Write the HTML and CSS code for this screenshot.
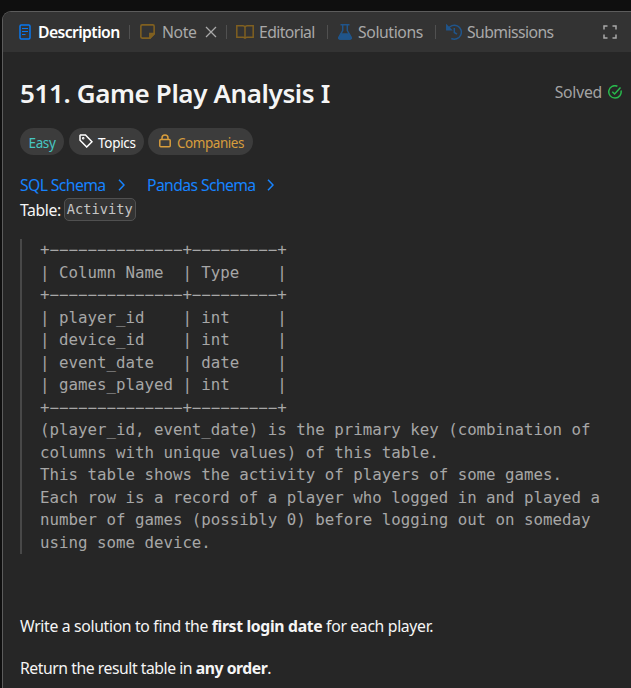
FILE: index.html
```html
<!DOCTYPE html>
<html lang="en">
<head>
<meta charset="utf-8">
<title>511. Game Play Analysis I</title>
<link rel="stylesheet" href="styles.css">
</head>
<body>
<main class="panel">
  <nav class="tabs">
    <div class="tab tab-description active">
      <svg class="icon blue-bright" width="12" height="16" viewBox="0 0 12 16"><rect x="1" y="1" width="10" height="14" rx="1.2"/><path d="M3 4.5h6M3 7.5h6M3 10.5h3.5" stroke-width="1.2"/></svg>
      <span class="label">Description</span>
    </div>
    <i class="divider"></i>
    <div class="tab tab-note">
      <svg class="icon gold" width="15" height="15" viewBox="0 0 14 14"><path d="M2 .8h10q1.2 0 1.2 1.2v7.2l-4 4H2Q.8 13.200.8 12V2Q.8.8 2 .8z"/><path d="M13.200 9h-4v4.200z" fill="currentColor"/></svg>
      <span class="label">Note</span>
      <svg class="icon close" width="12" height="12" viewBox="0 0 12 12"><path d="M1 1l10 10M11 1L1 11"/></svg>
    </div>
    <i class="divider"></i>
    <div class="tab tab-editorial">
      <svg class="icon gold" width="18" height="14" viewBox="0 0 18 14"><path d="M9 2.300Q8.400.8 7 .8H.8v11.400H7.200L9 13.200l1.800-1h6.400V.8H11Q9.600.8 9 2.300zV13"/></svg>
      <span class="label">Editorial</span>
    </div>
    <i class="divider"></i>
    <div class="tab tab-solutions">
      <svg class="icon blue" width="14" height="16" viewBox="0 0 14 16"><path d="M2.500.8h9M4.700 1v5.500L.9 13.200q-.7 1.800 1.200 1.800h9.800q1.900 0 1.200-1.800L9.300 6.500V1"/><path d="M3 10h8l2.200 4-1.200 1H2l-1.200-1z" fill="currentColor"/></svg>
      <span class="label">Solutions</span>
    </div>
    <i class="divider"></i>
    <div class="tab tab-submissions">
      <svg class="icon blue" width="16" height="16" viewBox="0 0 16 16"><path d="M2 5.200A7 7 0 1 1 5.300 14.500M8.300 4v4.500l2.700 1.700"/><path d="M.8 1.500v4.200H5z" fill="currentColor"/></svg>
      <span class="label">Submissions</span>
    </div>
    <svg class="icon expand" width="14" height="14" viewBox="0 0 14 14"><path d="M1 4.500V1h3.500M9.500 1H13v3.500M13 9.500V13H9.500M4.500 13H1V9.500"/></svg>
  </nav>

  <article class="content">
    <header class="heading">
      <h1>511. Game Play Analysis I</h1>
      <div class="solved"><span>Solved</span>
        <svg class="icon" width="14" height="14" viewBox="0 0 14 14"><path d="M9.400 1.200A6.200 6.200 0 1 0 13 5.500M4.300 6.800l2.300 2.200L12.500 2.600"/></svg>
      </div>
    </header>
    <div class="pills">
      <span class="pill easy">Easy</span>
      <span class="pill topics">
        <svg class="icon" width="14" height="14" viewBox="0 0 14 14"><path d="M1 1.500V6.200L7.700 13 13 7.700 6.500 1H1.500z"/><circle cx="4.200" cy="4.200" r=".5"/></svg>
        <span>Topics</span></span>
      <span class="pill companies">
        <svg class="icon" width="12" height="14" viewBox="0 0 12 14"><rect x=".8" y="5.500" width="10.400" height="7.300" rx="1"/><path d="M3 5.500V4a3 3 0 0 1 6 0v1.500"/></svg>
        <span>Companies</span></span>
    </div>
    <div class="schemas">
      <a class="sql"><span>SQL Schema</span><svg class="icon" width="7" height="12" viewBox="0 0 7 12"><path d="M1 .8L6 6 1 11.200"/></svg></a>
      <a class="pandas"><span>Pandas Schema</span><svg class="icon" width="7" height="12" viewBox="0 0 7 12"><path d="M1 .8L6 6 1 11.200"/></svg></a>
    </div>
    <p class="table-name"><span>Table:</span><code>Activity</code></p>
<pre class="schema">+−−−−−−−−−−−−−−+−−−−−−−−−+
| Column Name  | Type    |
+−−−−−−−−−−−−−−+−−−−−−−−−+
| player_id    | int     |
| device_id    | int     |
| event_date   | date    |
| games_played | int     |
+−−−−−−−−−−−−−−+−−−−−−−−−+
(player_id, event_date) is the primary key (combination of columns with unique values) of this table.
This table shows the activity of players of some games.
Each row is a record of a player who logged in and played a number of games (possibly 0) before logging out on someday using some device.</pre>
    <p class="task first"><span>Write a solution to find the <strong>first login date</strong> for each player.</span></p>
    <p class="task second"><span>Return the result table in <strong>any order</strong>.</span></p>
  </article>
</main>
</body>
</html>
```
FILE: styles.css
```css
* { box-sizing: border-box; }
body {
  margin: 0;
  padding: 11px 0 0 2px;
  height: 688px;
  overflow: hidden;
  background: #0f0f0f;
  color: #f5f5f5;
  font: 15.75px/22px "Noto Sans", "Open Sans", sans-serif;
}
.panel {
  height: 677px;
  overflow: hidden;
  background: #262626;
  border: 1px solid #5c5c5c;
  border-width: 1px 0 0 1px;
  border-radius: 9px 0 0 0;
}
.icon { flex: none; fill: none; stroke: currentColor; stroke-width: 1.5; }
.tabs {
  display: flex;
  align-items: center;
  height: 40px;
  padding: 0 14px 1px 16px;
  background: #333;
  color: #a9a9a9;
}
.tab { display: flex; align-items: center; white-space: nowrap; }
.label { margin-left: 6px; letter-spacing: -.4px; }
.active .label { margin-left: 7px; color: #fff; font-weight: 600; letter-spacing: -.6px; }
.tab-description { width: 110px; }
.tab-note { width: 86px; }
.tab-note .label { margin-left: 7px; }
.tab-editorial { width: 91px; }
.tab-editorial .label { margin-left: 5px; letter-spacing: -.6px; }
.tab-solutions { width: 97px; }
.tab-submissions { width: 110px; }
.tab-submissions .label { margin-left: 5px; letter-spacing: -.57px; }
.divider { flex: none; width: 1px; height: 14px; background: #505050; margin-right: 10px; }
.tab-note + .divider { margin-right: 9px; }
.close { margin-left: auto; margin-right: 9px; stroke-width: 1.300; }
.expand { margin-left: auto; }
.blue-bright { color: #0878f0; }
.blue { color: #20558b; }
.gold { color: #806020; }
.content { padding: 0 8px 0 17px; }
.heading { display: flex; justify-content: space-between; height: 76px; padding-top: 24px; }
h1 { margin: 0; font-size: 26px; line-height: 34px; font-weight: 600; letter-spacing: -.38px; white-space: nowrap; }
.solved { display: flex; align-items: center; gap: 6px; height: 32px; margin-right: 1px; color: #a3a3a3; letter-spacing: -.25px; }
.solved .icon { color: #28b84c; }
.pills { display: flex; gap: 5px; height: 27px; }
.pill { display: flex; align-items: center; height: 27px; padding-top: 2px; border-radius: 14px; background: #3c3c3c; font-size: 13.5px; white-space: nowrap; }
.pill .icon { margin-top: -4px; }
.easy { width: 44px; justify-content: center; color: #46c6c2; letter-spacing: -.4px; }
.topics { width: 75px; padding-left: 10px; gap: 5px; color: #fff; letter-spacing: -.3px; }
.companies { width: 105px; margin-left: -1px; padding-left: 11px; gap: 6px; color: #d89d3c; letter-spacing: -.45px; }
.schemas { display: flex; height: 23px; margin-top: 18px; color: #1683ff; }
.schemas a { display: flex; align-items: center; justify-content: space-between; white-space: nowrap; letter-spacing: -.62px; }
.sql { width: 105px; margin-right: 22px; }
.pandas { width: 127px; }
.table-name { display: flex; align-items: center; height: 25px; margin: 1px 0 17px; gap: 3px; letter-spacing: -.4px; }
code { height: 23px; padding: 0 2px; border: 1px solid #505050; border-radius: 5px; background: #333; color: #c5c5c5; font: 13.700px/21px "DejaVu Sans Mono", monospace; letter-spacing: 0; }
.schema {
  margin: 0;
  padding-left: 18px;
  border-left: 2px solid #484848;
  color: #a7a7a7;
  font: 15.780px/22.500px "DejaVu Sans Mono", monospace;
  white-space: pre-wrap;
}
.task { margin: 0; white-space: nowrap; letter-spacing: -.33px; }
.first { margin-top: 61px; }
.second { margin-top: 20px; letter-spacing: -.46px; }
```
